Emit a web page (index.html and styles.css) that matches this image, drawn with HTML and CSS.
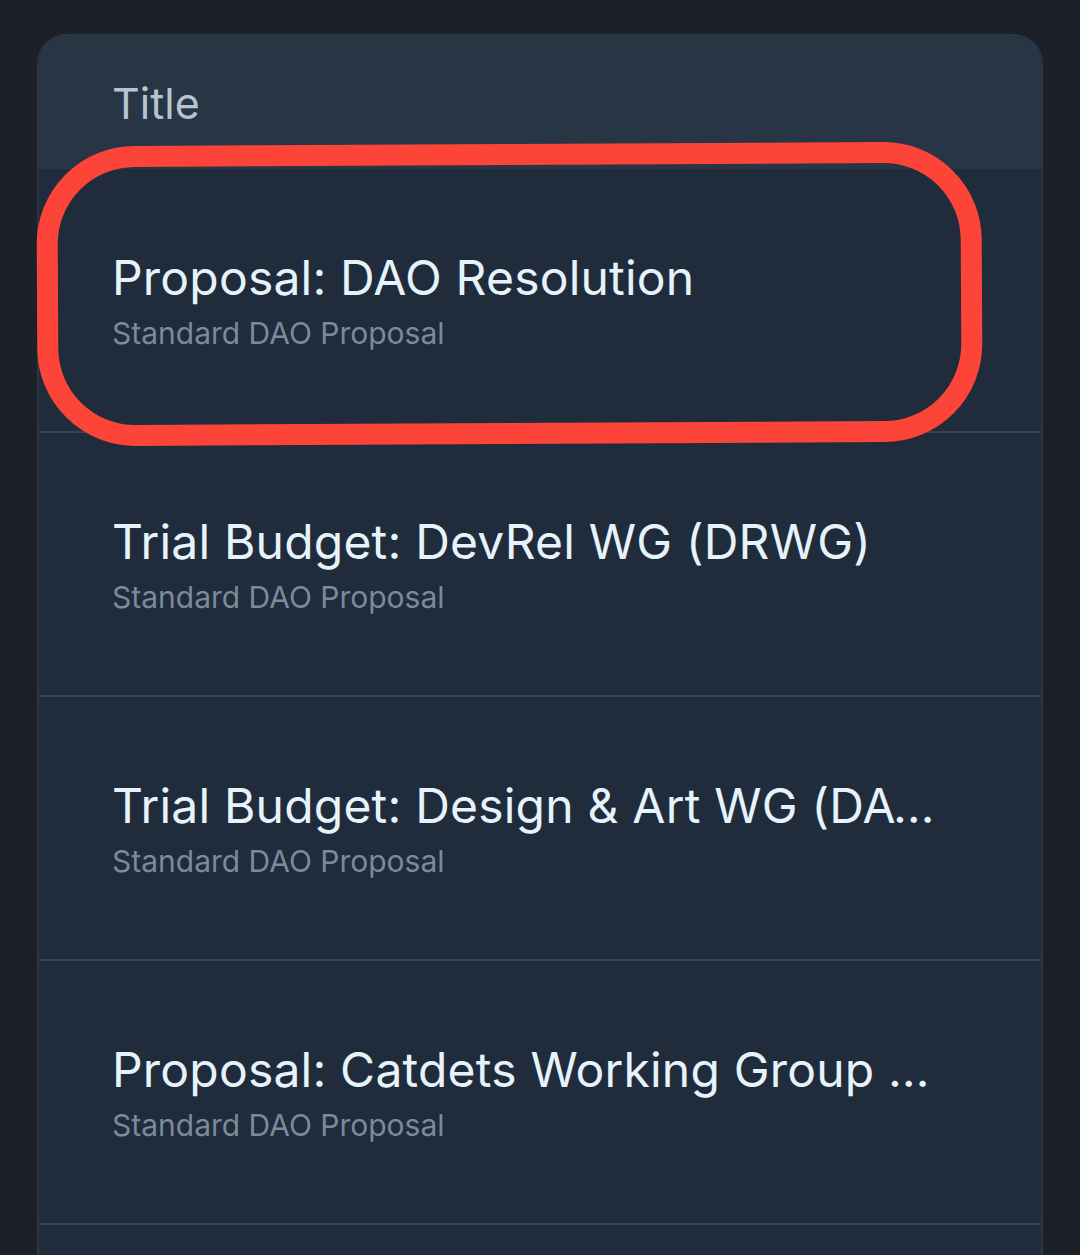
FILE: index.html
```html
<!DOCTYPE html>
<html lang="en">
<head>
    <meta charset="UTF-8">
    <meta name="viewport" content="width=device-width, initial-scale=1.0">
    <title>Proposals</title>
    <link rel="stylesheet" href="styles.css">
</head>
<body>
    <div class="table-card">
        <div class="table-header">Title</div>
        <div class="proposal-row">
            <div class="proposal-title">Proposal: DAO Resolution</div>
            <div class="proposal-type">Standard DAO Proposal</div>
        </div>
        <div class="proposal-row">
            <div class="proposal-title">Trial Budget: DevRel WG (DRWG)</div>
            <div class="proposal-type">Standard DAO Proposal</div>
        </div>
        <div class="proposal-row">
            <div class="proposal-title">Trial Budget: Design &amp; Art WG (DAWG)</div>
            <div class="proposal-type">Standard DAO Proposal</div>
        </div>
        <div class="proposal-row">
            <div class="proposal-title">Proposal: Catdets Working Group (CWG)</div>
            <div class="proposal-type">Standard DAO Proposal</div>
        </div>
        <div class="proposal-row">
            <div class="proposal-title">Proposal: Treasury Management</div>
            <div class="proposal-type">Standard DAO Proposal</div>
        </div>
    </div>

    <!-- red highlight drawn over the first row -->
    <div class="highlight"></div>
</body>
</html>
```

FILE: styles.css
```css
body {
    margin: 0;
    background-color: #1b2029;
    font-family: Inter, "Noto Sans", sans-serif;
    height: 1255px;
    overflow: hidden;
    position: relative;
}

.table-card {
    margin: 34px 0 0 37px;
    width: 1002px;
    border: 2px solid #2d3744;
    border-bottom: none;
    border-radius: 30px 30px 0 0;
    overflow: hidden;
    background-color: #202c3b;
}

.table-header {
    height: 133px;
    display: flex;
    align-items: center;
    padding-left: 73px;
    background-color: #283544;
    color: #b6c4cf;
    font-size: 43px;
}

.proposal-row {
    height: 262px;
    display: flex;
    flex-direction: column;
    justify-content: center;
    padding-left: 73px;
    border-bottom: 2px solid #38434f;
}

.proposal-title {
    max-width: 826px;
    color: #e6f3fa;
    font-size: 48px;
    line-height: 58px;
    letter-spacing: 0.2px;
    white-space: nowrap;
    overflow: hidden;
    text-overflow: ellipsis;
}

.proposal-type {
    margin-top: 8px;
    color: #7b8a99;
    font-size: 30px;
    line-height: 36px;
}

.highlight {
    position: absolute;
    left: 37px;
    top: 144px;
    width: 903px;
    height: 258px;
    border: 21px solid #fc4538;
    border-radius: 98px;
    transform: rotate(-0.3deg);
}
```
